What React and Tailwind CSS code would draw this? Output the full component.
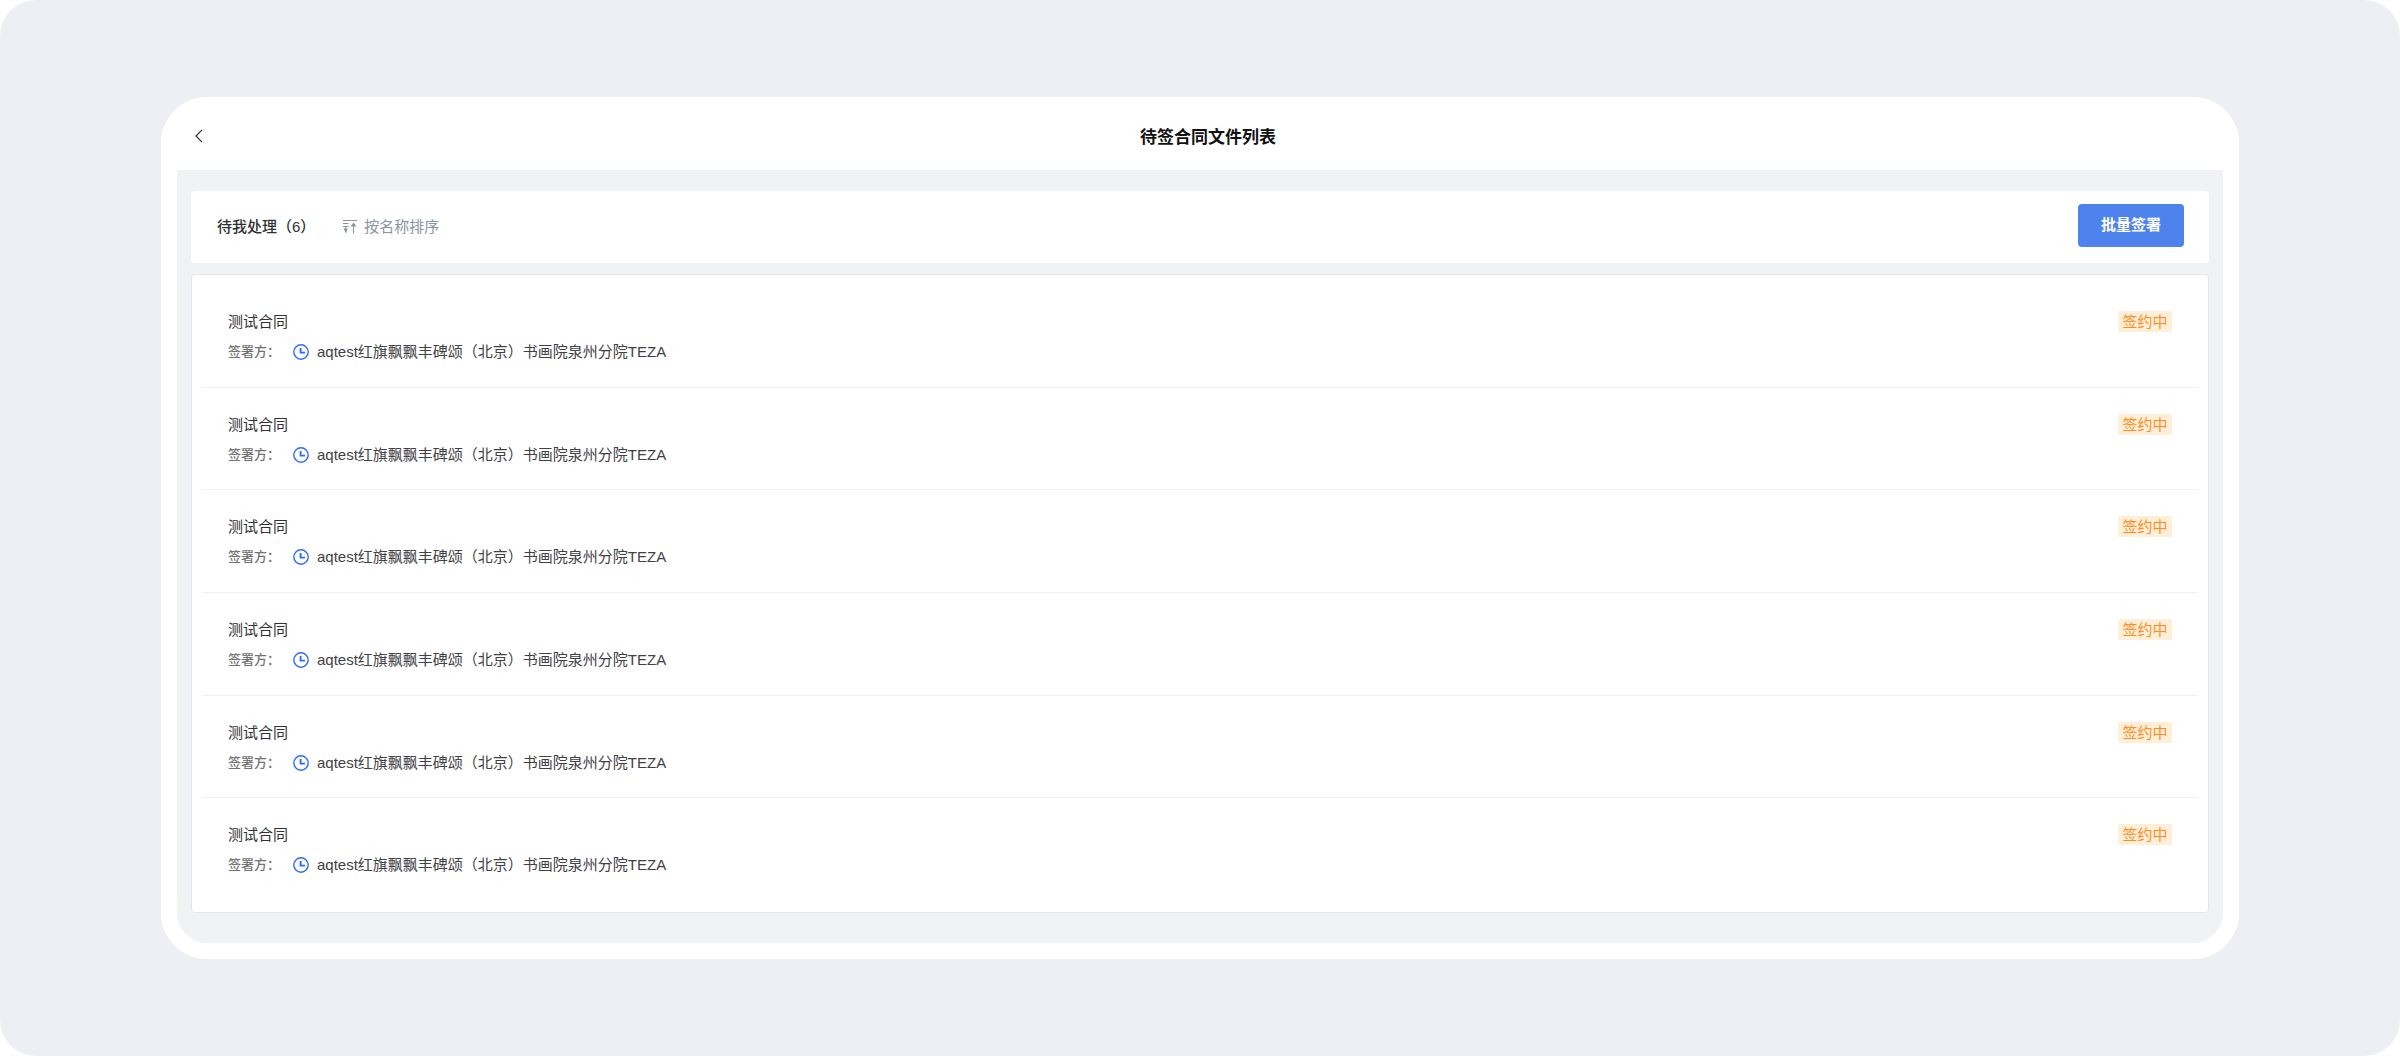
const contracts = Array.from({ length: 6 }, (_, i) => ({
    id: i + 1,
    title: '测试合同',
    signer: 'aqtest红旗飘飘丰碑颂（北京）书画院泉州分院TEZA',
    status: '签约中',
}));

const BackIcon = () => (
    <svg width="8" height="14" viewBox="0 0 8 14" fill="none" stroke="currentColor" strokeWidth="1.2">
        <path d="M7 0.8 1 7l6 6.2" />
    </svg>
);

const SortIcon = () => (
    <svg width="14" height="14" viewBox="0 0 14 14" fill="none" stroke="currentColor">
        <path d="M0 0.5h14M0 3.5h5.5M0 6.5h5.5M2.75 6.5v6M10.5 5v8.5" />
        <path d="M0.5 8.5h4.5L2.75 13zM10.5 2.5l3 4h-6z" fill="currentColor" stroke="none" />
    </svg>
);

const ClockIcon = () => (
    <svg width="16" height="16" viewBox="0 0 16 16" fill="none" stroke="currentColor">
        <circle cx="8" cy="8" r="7.2" strokeWidth="1.4" />
        <path d="M7.6 4v4.6H12" strokeWidth="1.9" />
    </svg>
);

const ContractRow = ({ contract }) => (
    <li className="flex flex-1 items-start justify-between border-b border-[#f0f1f3] px-[26px] pt-[25px] last:border-b-0">
        <div>
            <h2 className="text-[15px] leading-6 text-[#303133]">{contract.title}</h2>
            <div className="mt-1.5 flex items-center text-[15px] leading-6 text-[#3f4145]">
                <span className="w-[65px] text-[13px] font-medium text-[#737373]">签署方：</span>
                <span className="text-[#2f6bff]">
                    <ClockIcon />
                </span>
                <span className="ml-2">{contract.signer}</span>
            </div>
        </div>
        <span className="mt-px w-[54px] rounded-xs bg-[#ffefd9] text-center text-[15px] leading-[21px] text-[#ff8d1e]">
            {contract.status}
        </span>
    </li>
);

const App = () => {
    return (
        <div className="flex min-h-screen flex-col rounded-[36px] bg-[#ecf0f5] px-[161px] py-[97px] font-['Liberation_Sans','Noto_Sans_CJK_SC',sans-serif]">
            <div className="flex flex-1 flex-col rounded-[46px] bg-white px-4 pb-4">
                <header className="flex h-[73px] items-center px-4 pt-1.5">
                    <button type="button" aria-label="返回" className="flex w-4 items-center pb-px pl-0.5 text-[#303133]">
                        <BackIcon />
                    </button>
                    <h1 className="flex-1 pt-0.5 text-center text-[17px] font-bold text-[#111111]">待签合同文件列表</h1>
                </header>

                <main className="flex flex-1 flex-col gap-[11px] rounded-b-[30px] bg-[#f1f2f4] px-3.5 pt-[21px] pb-[30px]">
                    {/* Toolbar */}
                    <div className="flex h-[72px] items-center rounded bg-white pr-[25px] pl-[26px]">
                        <span className="text-[15px] font-medium text-[#303133]">待我处理（6）</span>
                        <button type="button" className="ml-7 flex items-center gap-[7px] text-[15px] text-[#8b93a1]">
                            <SortIcon />
                            按名称排序
                        </button>
                        <button
                            type="button"
                            className="mb-1 ml-auto h-[43px] rounded bg-[#4e83ee] px-[23px] pt-px text-[15px] font-bold text-white"
                        >
                            批量签署
                        </button>
                    </div>

                    {/* Contract list */}
                    <ul className="flex flex-1 flex-col rounded border border-[#e4e7ed] bg-white px-2.5 pt-2.5 pb-3">
                        {contracts.map((contract) => (
                            <ContractRow key={contract.id} contract={contract} />
                        ))}
                    </ul>
                </main>
            </div>
        </div>
    );
};

export default App;
